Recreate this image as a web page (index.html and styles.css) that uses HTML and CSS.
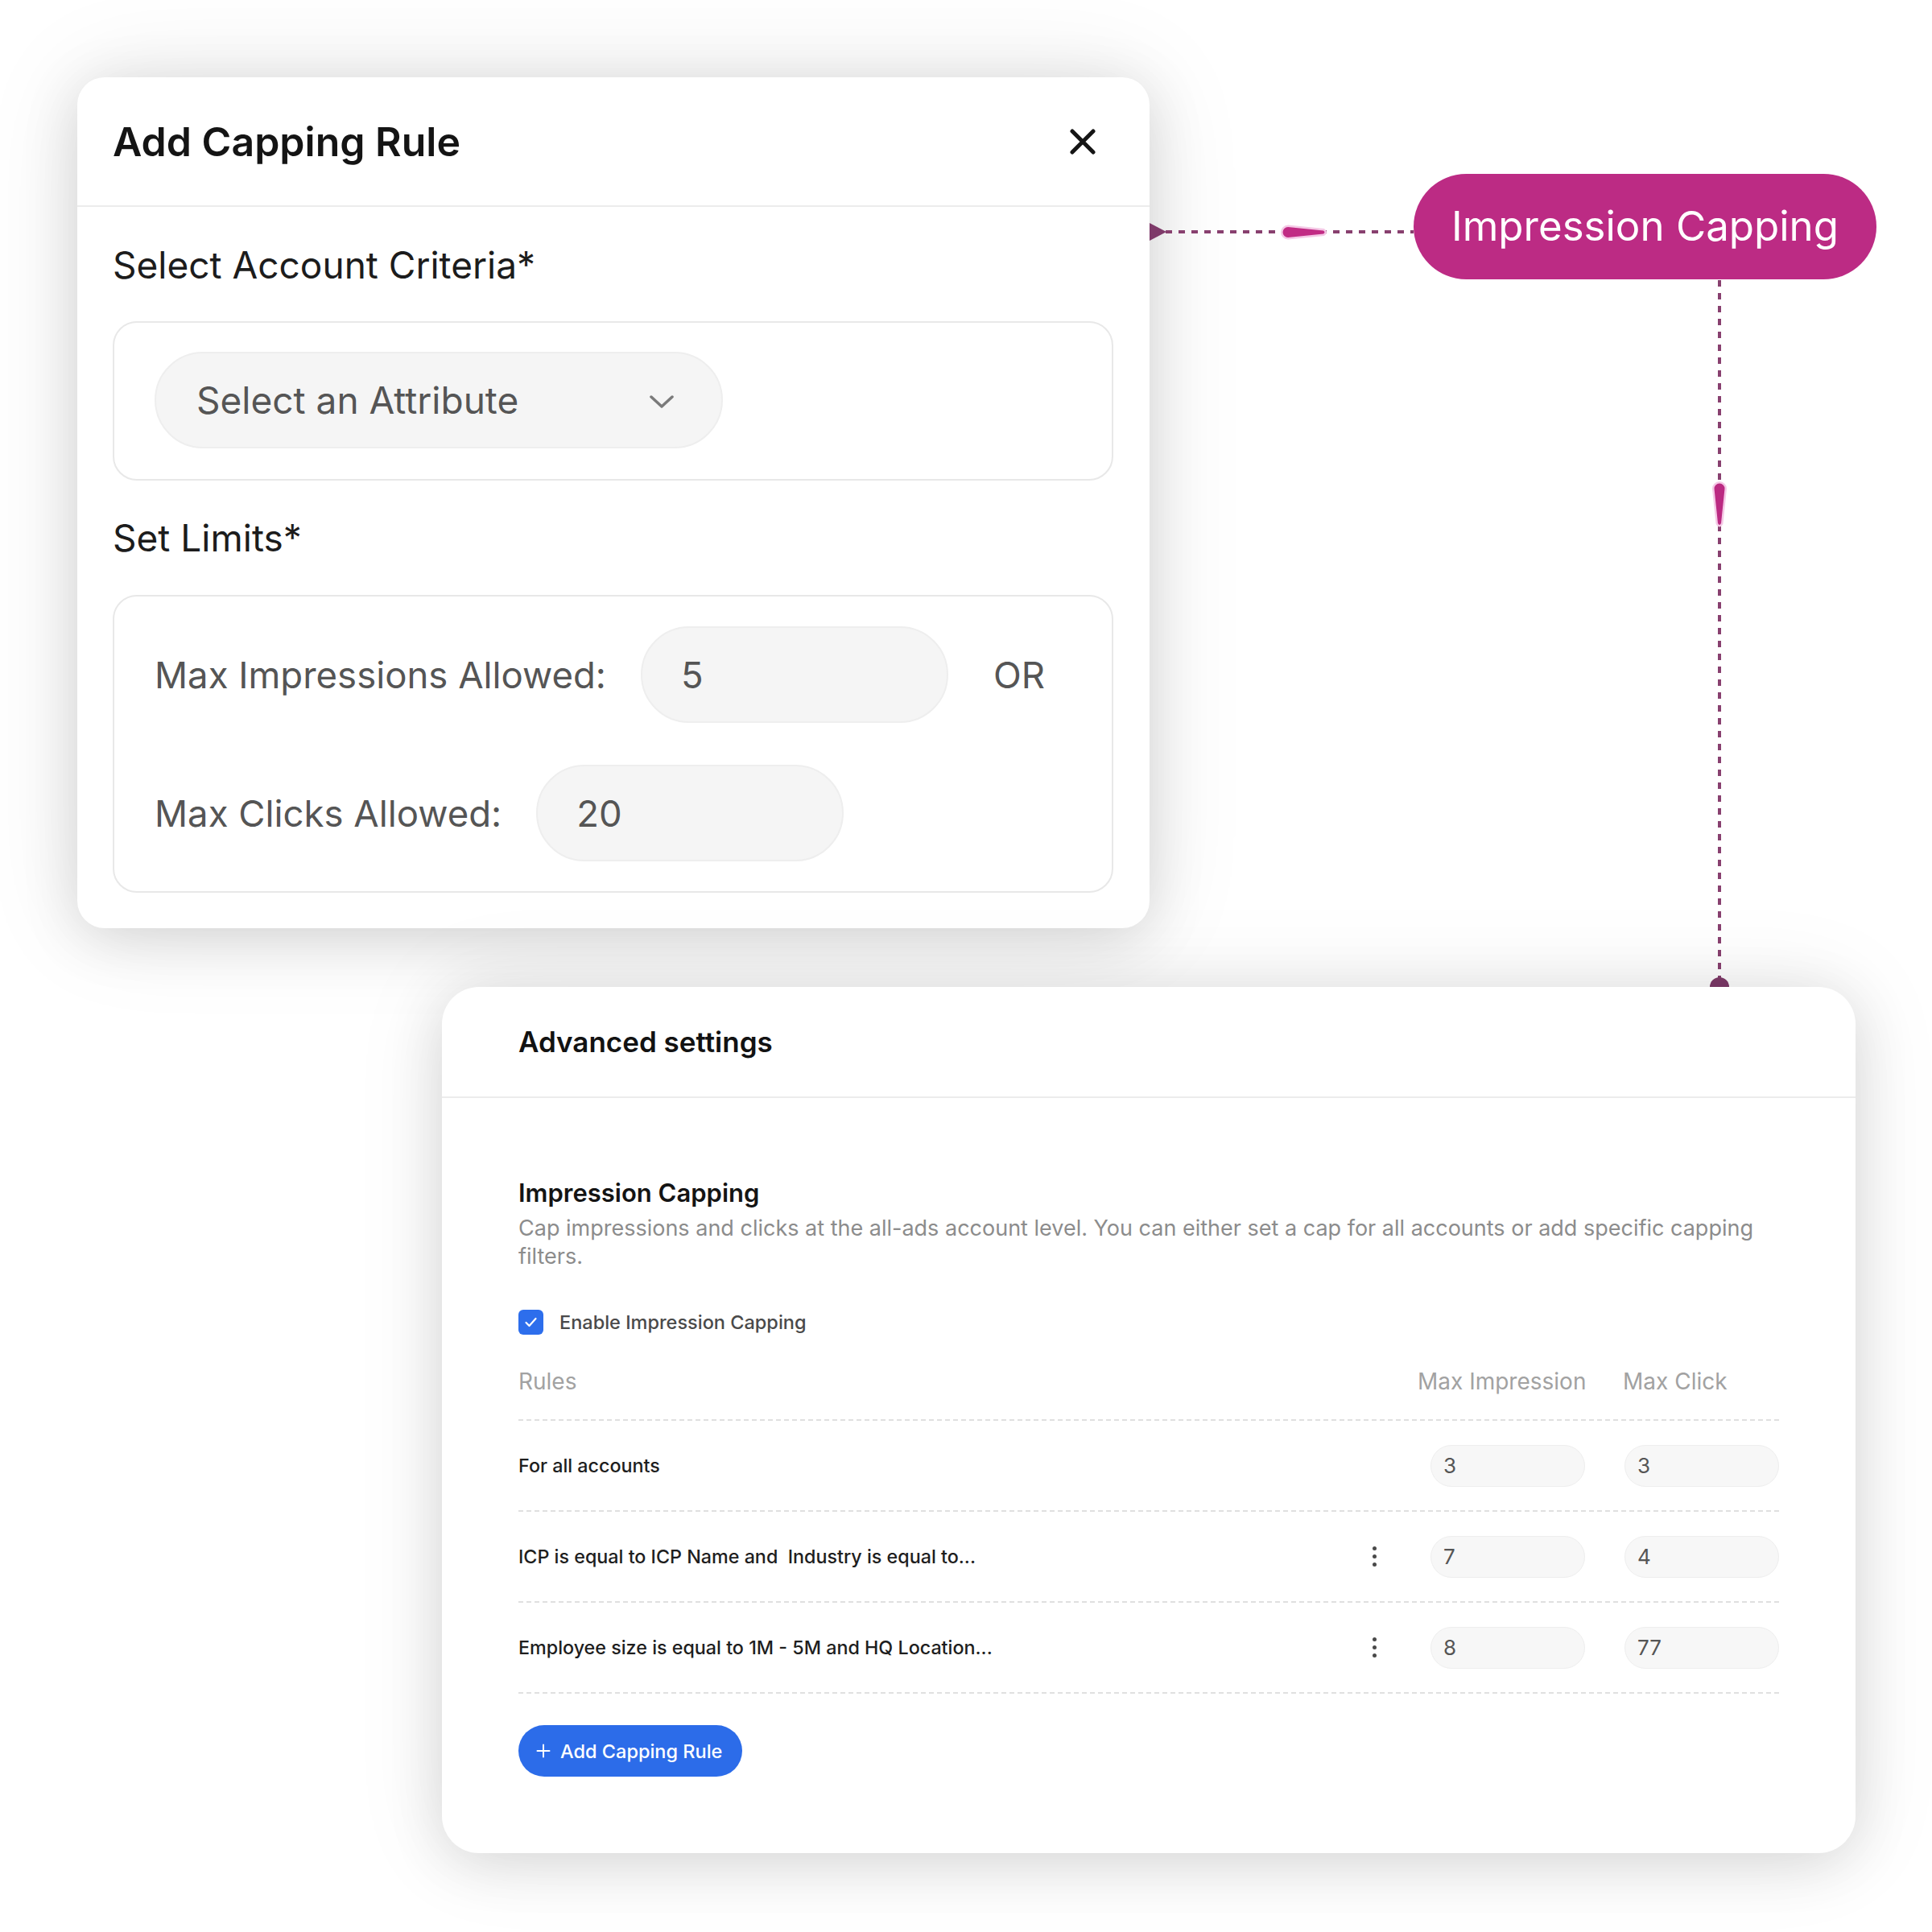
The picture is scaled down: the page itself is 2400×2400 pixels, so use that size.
FILE: index.html
```html
<!DOCTYPE html>
<html lang="en">
<head>
<meta charset="utf-8">
<title>Capping rules</title>
<link rel="stylesheet" href="styles.css">
</head>
<body>
<main class="canvas">

  <section class="rule-dialog">
    <header class="dialog-head">
      <h2 class="dialog-title">Add Capping Rule</h2>
      <button class="close-btn" aria-label="Close">
        <svg viewBox="0 0 32 32" width="32" height="32"><path d="M3 3 L29 29 M29 3 L3 29" stroke="#151515" stroke-width="5" stroke-linecap="round" fill="none"/></svg>
      </button>
    </header>
    <div class="dialog-body">
      <h3 class="field-title">Select Account Criteria*</h3>
      <div class="field-box criteria-box">
        <div class="select-pill">
          <span>Select an Attribute</span>
          <svg class="chevron" viewBox="0 0 30 16" width="30" height="16"><path d="M2 2 L15 14 L28 2" stroke="#7a7a7a" stroke-width="3.5" stroke-linecap="round" stroke-linejoin="round" fill="none"/></svg>
        </div>
      </div>
      <h3 class="field-title">Set Limits*</h3>
      <div class="field-box limits-box">
        <div class="limit-row">
          <span class="limit-label">Max Impressions Allowed:</span>
          <div class="limit-input">5</div>
          <span class="limit-or">OR</span>
        </div>
        <div class="limit-row">
          <span class="limit-label">Max Clicks Allowed:</span>
          <div class="limit-input">20</div>
        </div>
      </div>
    </div>
  </section>

  <svg class="connectors" viewBox="0 0 2400 2400" width="2400" height="2400">
    <line x1="1448" y1="288" x2="1756" y2="288" stroke="#88406f" stroke-width="4" stroke-dasharray="8 8"/>
    <polygon points="1428,277 1449,288 1428,299" fill="#7e3a69"/>
    <path d="M1600 282 L1644 286.5 Q1647 288.5 1644 290.5 L1600 295 A6.5 6.5 0 0 1 1600 282 Z" fill="#c12b84" stroke="#f5c9e6" stroke-width="5" paint-order="stroke"/>
    <line x1="2136" y1="348" x2="2136" y2="1226" stroke="#88406f" stroke-width="4" stroke-dasharray="8 8"/>
    <path d="M2129.5 607 A6.5 6.5 0 0 1 2142.5 607 L2138 650 Q2136 654 2134 650 Z" fill="#bb2a82" stroke="#f5c9e6" stroke-width="5" paint-order="stroke"/>
    <circle cx="2136" cy="1226" r="12" fill="#7e3a69"/>
  </svg>

  <div class="feature-pill">Impression Capping</div>

  <section class="settings-card">
    <header class="settings-head">
      <h2 class="settings-title">Advanced settings</h2>
    </header>
    <div class="settings-body">
      <h3 class="section-title">Impression Capping</h3>
      <p class="section-desc">Cap impressions and clicks at the all-ads account level. You can either set a cap for all accounts or add specific capping filters.</p>
      <label class="check-row">
        <span class="checkbox">
          <svg viewBox="0 0 31 31" width="31" height="31"><path d="M9.5 16 L13.5 20 L21.5 11" stroke="#fff" stroke-width="2.2" stroke-linecap="round" stroke-linejoin="round" fill="none"/></svg>
        </span>
        <span class="check-label">Enable Impression Capping</span>
      </label>

      <div class="rules-table">
        <div class="table-head">
          <span class="col-rule">Rules</span>
          <span class="col-imp">Max Impression</span>
          <span class="col-click">Max Click</span>
        </div>
        <div class="rule-row">
          <span class="rule-text">For all accounts</span>
          <span class="kebab kebab-empty"></span>
          <span class="value-pill">3</span>
          <span class="value-pill">3</span>
        </div>
        <div class="rule-row">
          <span class="rule-text">ICP is equal to ICP Name and&nbsp; Industry is equal to...</span>
          <span class="kebab"><i></i><i></i><i></i></span>
          <span class="value-pill">7</span>
          <span class="value-pill">4</span>
        </div>
        <div class="rule-row">
          <span class="rule-text">Employee size is equal to 1M - 5M and HQ Location...</span>
          <span class="kebab"><i></i><i></i><i></i></span>
          <span class="value-pill">8</span>
          <span class="value-pill">77</span>
        </div>
      </div>

      <button class="add-btn">
        <svg viewBox="0 0 18 18" width="18" height="18"><path d="M9 1.5 V16.5 M1.5 9 H16.5" stroke="#fff" stroke-width="2" stroke-linecap="round"/></svg>
        <span>Add Capping Rule</span>
      </button>
    </div>
  </section>

</main>
</body>
</html>
```

FILE: styles.css
```css
* {
  box-sizing: border-box;
}

html, body {
  margin: 0;
  padding: 0;
  background: #ffffff;
}

body {
  font-family: "Inter", "Noto Sans", "Liberation Sans", sans-serif;
  color: #1a1a1a;
}

.canvas {
  position: relative;
  width: 2400px;
  height: 2400px;
  overflow: hidden;
  background: #ffffff;
}

/* ---------- Add Capping Rule dialog ---------- */

.rule-dialog {
  position: absolute;
  left: 96px;
  top: 96px;
  width: 1332px;
  background: #ffffff;
  border-radius: 34px;
  box-shadow: 0 12px 70px rgba(0, 0, 0, 0.13), 0 0 130px rgba(0, 0, 0, 0.09);
}

.dialog-head {
  height: 161px;
  padding: 0 67px 0 44px;
  display: flex;
  align-items: center;
  justify-content: space-between;
  border-bottom: 2px solid #ececec;
}

.dialog-title {
  margin: 0;
  font-size: 50px;
  font-weight: 600;
  color: #141414;
}

.close-btn {
  border: 0;
  padding: 0;
  background: none;
  width: 32px;
  height: 32px;
  display: flex;
}

.dialog-body {
  padding: 47px 45px 44px 44px;
  display: flex;
  flex-direction: column;
}

.field-title {
  margin: 0;
  font-size: 46px;
  line-height: 50px;
  font-weight: 400;
  color: #1c1c1c;
}

.field-box {
  border: 2px solid #e8e8e8;
  border-radius: 30px;
  padding: 0 49px 0 50px;
}

.criteria-box {
  margin-top: 45px;
  padding-top: 36px;
  padding-bottom: 38px;
  margin-bottom: 46px;
}

.select-pill {
  width: 706px;
  height: 120px;
  border-radius: 60px;
  background: #f5f5f5;
  border: 2px solid #eeeeee;
  display: flex;
  align-items: center;
  justify-content: space-between;
  padding: 0 59px 0 50px;
  font-size: 46px;
  color: #555555;
}

.chevron {
  margin-top: 4px;
}

.limits-box {
  margin-top: 46px;
  padding-top: 37px;
  padding-bottom: 37px;
  display: flex;
  flex-direction: column;
  gap: 52px;
}

.limit-row {
  display: flex;
  align-items: center;
  font-size: 45.5px;
  color: #555555;
}

.limit-label {
  margin-right: 43px;
}

.limit-input {
  width: 382px;
  height: 120px;
  border-radius: 60px;
  background: #f5f5f5;
  border: 2px solid #eeeeee;
  display: flex;
  align-items: center;
  padding-left: 48px;
  color: #555555;
}

.limit-or {
  margin-left: 56px;
}

/* ---------- connectors ---------- */

.connectors {
  position: absolute;
  left: 0;
  top: 0;
  pointer-events: none;
}

.feature-pill {
  position: absolute;
  left: 1756px;
  top: 216px;
  width: 575px;
  height: 131px;
  border-radius: 66px;
  background: #bc2b84;
  color: #ffffff;
  font-size: 51px;
  display: flex;
  align-items: center;
  justify-content: center;
  padding-bottom: 2px;
}

/* ---------- Advanced settings card ---------- */

.settings-card {
  position: absolute;
  left: 549px;
  top: 1226px;
  width: 1756px;
  background: #ffffff;
  border-radius: 46px;
  box-shadow: 0 12px 70px rgba(0, 0, 0, 0.12), 0 0 120px rgba(0, 0, 0, 0.08);
}

.settings-head {
  height: 138px;
  padding: 0 95px;
  display: flex;
  align-items: center;
  border-bottom: 2px solid #ececec;
}

.settings-title {
  margin: 0;
  font-size: 35px;
  font-weight: 600;
  color: #121212;
}

.settings-body {
  padding: 100px 95px 95px 95px;
  display: flex;
  flex-direction: column;
  align-items: flex-start;
}

.section-title {
  margin: 0;
  font-size: 31px;
  line-height: 36px;
  font-weight: 600;
  color: #141414;
}

.section-desc {
  margin: 8px 0 0 0;
  font-size: 27px;
  line-height: 35px;
  color: #8c8c8c;
}

.check-row {
  margin-top: 49px;
  display: flex;
  align-items: center;
  gap: 20px;
}

.checkbox {
  width: 31px;
  height: 31px;
  border-radius: 6px;
  background: #2d6eec;
  display: flex;
}

.check-label {
  font-size: 23.5px;
  font-weight: 500;
  color: #4a4a4a;
}

.rules-table {
  align-self: stretch;
  margin-top: 31px;
}

.table-head {
  height: 76px;
  padding-bottom: 20px;
  display: flex;
  align-items: center;
  font-size: 28px;
  color: #a2a2a2;
  border-bottom: 2px dashed #e0e0e0;
}

.col-rule {
  flex: 1;
}

.col-imp {
  width: 255px;
}

.col-click {
  width: 194px;
}

.rule-row {
  height: 113px;
  display: flex;
  align-items: center;
  border-bottom: 2px dashed #e0e0e0;
}

.rule-text {
  flex: 1;
  font-size: 23.3px;
  font-weight: 500;
  color: #1e1e1e;
}

.kebab {
  width: 24px;
  display: flex;
  flex-direction: column;
  align-items: center;
  gap: 5px;
  margin-right: 58px;
}

.kebab i {
  width: 5px;
  height: 5px;
  border-radius: 50%;
  background: #4a4a4a;
}

.value-pill {
  width: 192px;
  height: 52px;
  border-radius: 26px;
  background: #f7f7f7;
  border: 1.5px solid #eeeeee;
  display: flex;
  align-items: center;
  padding-left: 15px;
  font-size: 26px;
  color: #555555;
}

.value-pill + .value-pill {
  margin-left: 49px;
}

.add-btn {
  margin-top: 39px;
  height: 64px;
  border: 0;
  border-radius: 32px;
  background: #2c6ce9;
  color: #ffffff;
  font-family: inherit;
  font-size: 23.5px;
  font-weight: 500;
  display: flex;
  align-items: center;
  gap: 12px;
  padding: 0 25px 0 22px;
}
```
